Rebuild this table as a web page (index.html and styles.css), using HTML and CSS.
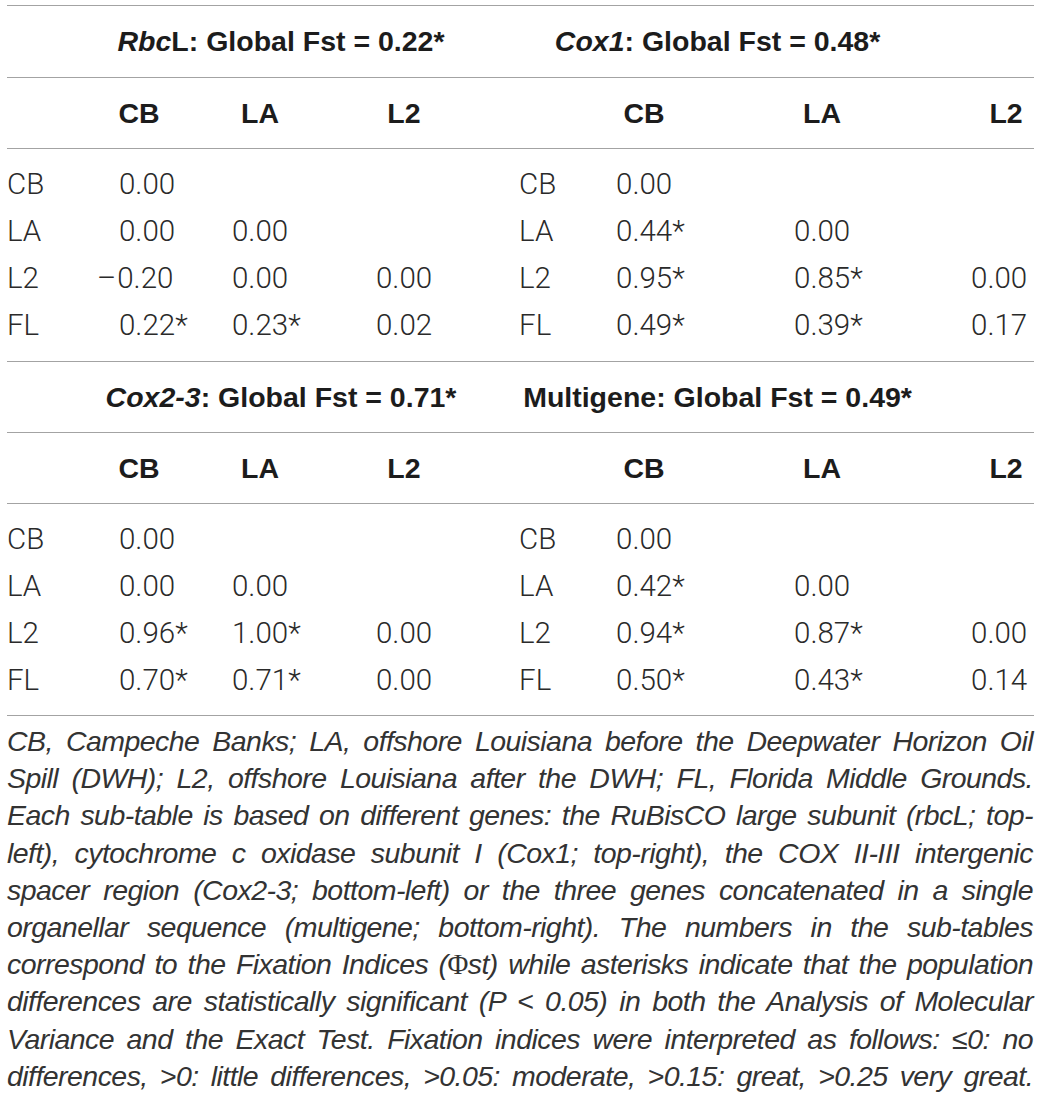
FILE: index.html
```html
<!DOCTYPE html>
<html>
<head>
  <title>Pairwise Fst</title>
  <link rel="stylesheet" href="styles.css">
</head>
<body>
  <div class="figure">
    <table class="fst">
      <colgroup>
        <col class="c-lab1">
        <col class="c-cb1">
        <col class="c-la1">
        <col class="c-l21">
        <col class="c-lab2">
        <col class="c-cb2">
        <col class="c-la2">
        <col class="c-l22">
      </colgroup>

      <tr class="title first">
        <td colspan="4" class="title-left"><i>Rbc</i>L: Global Fst = 0.22*</td>
        <td colspan="4" class="title-right"><i>Cox1</i>: Global Fst = 0.48*</td>
      </tr>
      <tr class="head">
        <td></td>
        <th class="h-first"><span>CB</span></th>
        <th><span>LA</span></th>
        <th><span>L2</span></th>
        <td></td>
        <th><span>CB</span></th>
        <th><span>LA</span></th>
        <th class="h-last"><span>L2</span></th>
      </tr>
      <tr class="row top">
        <td>CB</td><td>0.00</td><td></td><td></td>
        <td>CB</td><td>0.00</td><td></td><td></td>
      </tr>
      <tr class="row">
        <td>LA</td><td>0.00</td><td>0.00</td><td></td>
        <td>LA</td><td>0.44*</td><td>0.00</td><td></td>
      </tr>
      <tr class="row">
        <td>L2</td><td><span class="neg">–</span>0.20</td><td>0.00</td><td>0.00</td>
        <td>L2</td><td>0.95*</td><td>0.85*</td><td>0.00</td>
      </tr>
      <tr class="row bottom">
        <td>FL</td><td>0.22*</td><td>0.23*</td><td>0.02</td>
        <td>FL</td><td>0.49*</td><td>0.39*</td><td>0.17</td>
      </tr>

      <tr class="title">
        <td colspan="4" class="title-left"><i>Cox2-3</i>: Global Fst = 0.71*</td>
        <td colspan="4" class="title-right">Multigene: Global Fst = 0.49*</td>
      </tr>
      <tr class="head">
        <td></td>
        <th class="h-first"><span>CB</span></th>
        <th><span>LA</span></th>
        <th><span>L2</span></th>
        <td></td>
        <th><span>CB</span></th>
        <th><span>LA</span></th>
        <th class="h-last"><span>L2</span></th>
      </tr>
      <tr class="row top">
        <td>CB</td><td>0.00</td><td></td><td></td>
        <td>CB</td><td>0.00</td><td></td><td></td>
      </tr>
      <tr class="row">
        <td>LA</td><td>0.00</td><td>0.00</td><td></td>
        <td>LA</td><td>0.42*</td><td>0.00</td><td></td>
      </tr>
      <tr class="row">
        <td>L2</td><td>0.96*</td><td>1.00*</td><td>0.00</td>
        <td>L2</td><td>0.94*</td><td>0.87*</td><td>0.00</td>
      </tr>
      <tr class="row bottom last">
        <td>FL</td><td>0.70*</td><td>0.71*</td><td>0.00</td>
        <td>FL</td><td>0.50*</td><td>0.43*</td><td>0.14</td>
      </tr>
    </table>

    <p class="caption">
      CB, Campeche Banks; LA, offshore Louisiana before the Deepwater Horizon Oil Spill (DWH); L2, offshore Louisiana after the DWH; FL, Florida Middle Grounds. Each sub-table is based on different genes: the RuBisCO large subunit (rbcL; top-left), cytochrome c oxidase subunit I (Cox1; top-right), the COX II-III intergenic spacer region (Cox2-3; bottom-left) or the three genes concatenated in a single organellar sequence (multigene; bottom-right). The numbers in the sub-tables correspond to the Fixation Indices (<span class="phi">Φ</span>st) while asterisks indicate that the population differences are statistically significant (P &lt; 0.05) in both the Analysis of Molecular Variance and the Exact Test. Fixation indices were interpreted as follows: ≤0: no differences, &gt;0: little differences, &gt;0.05: moderate, &gt;0.15: great, &gt;0.25 very great.
    </p>
  </div>
</body>
</html>
```

FILE: styles.css
```css
:root {
  --text: #1c1c1c;
  --text-light: #2a2a2a;
  --caption: #333333;
  --rule: #a3a3a3;
}

* {
  margin: 0;
  padding: 0;
  box-sizing: border-box;
}

body {
  background: #ffffff;
  color: var(--text);
  font-family: 'Liberation Sans', Arial, sans-serif;
  font-size: 28.5px;
}

.figure {
  padding: 5px 7px 0 7px;
  width: 1041px;
}

/* Table */

.fst {
  width: 1027px;
  table-layout: fixed;
  border-collapse: separate;
  border-spacing: 0;
}

.c-lab1 { width: 112px; }
.c-cb1  { width: 113px; }
.c-la1  { width: 144px; }
.c-l21  { width: 143px; }
.c-lab2 { width: 97px; }
.c-cb2  { width: 178px; }
.c-la2  { width: 177px; }
.c-l22  { width: 63px; }

.fst td,
.fst th {
  padding: 0;
  text-align: left;
  white-space: nowrap;
  vertical-align: middle;
}

.title td {
  font-weight: 700;
  line-height: 70px;
  text-align: center;
  border-bottom: 1px solid var(--rule);
}

.title.first td {
  line-height: 71px;
  border-top: 1px solid var(--rule);
}

.title .title-left {
  text-align: center;
  padding-left: 36px;
}

.title .title-right {
  text-align: center;
  padding-right: 118px;
}

.head td,
.head th {
  font-weight: 700;
  line-height: 70px;
  border-bottom: 1px solid var(--rule);
}

.head th span {
  display: inline-block;
  min-width: 56px;
  text-align: center;
}

.head .h-first span {
  margin-left: -8px;
}

.head .h-last span {
  margin-left: 7px;
}

.row td {
  font-family: 'Roboto', 'Liberation Sans', sans-serif;
  font-size: 29.5px;
  font-weight: 300;
  color: var(--text-light);
  line-height: 47px;
}

.row.top td {
  padding-top: 12px;
}

.row.bottom td {
  padding-bottom: 12px;
  border-bottom: 1px solid var(--rule);
}

.row.bottom.last td {
  padding-bottom: 11px;
}

.neg {
  margin-left: -22px;
  margin-right: 1px;
}

/* Caption */

.caption {
  margin-top: 7px;
  width: 1026px;
  font-style: italic;
  color: var(--caption);
  letter-spacing: -0.55px;
  line-height: 37.2px;
  text-align: justify;
  text-align-last: justify;
}

.phi {
  font-family: 'Liberation Serif', serif;
  font-style: normal;
}
```
